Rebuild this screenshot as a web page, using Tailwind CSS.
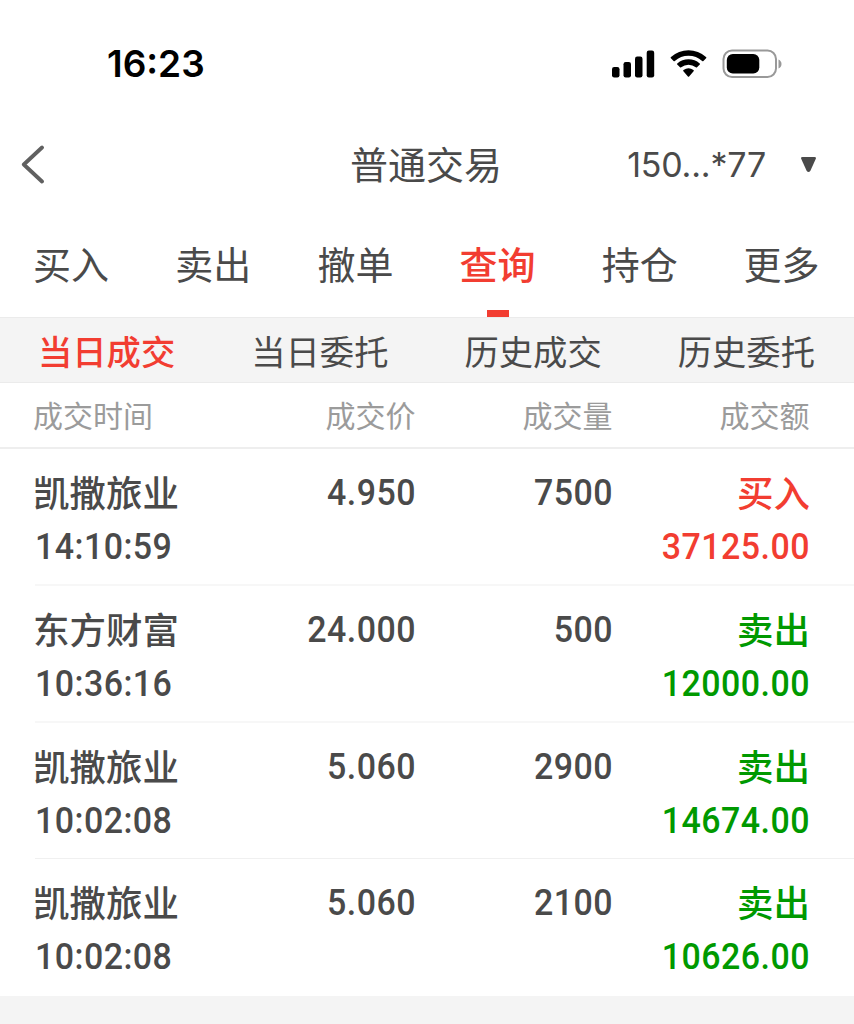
<!DOCTYPE html>
<html lang="zh-CN">
<head>
<meta charset="utf-8">
<title>普通交易</title>
<script src="https://cdn.jsdelivr.net/npm/@tailwindcss/browser@4"></script>
</head>
<body class="w-[854px] h-[1024px] overflow-hidden bg-[#f4f4f4] text-[#4a4a4a] font-['Noto_Sans_CJK_SC',sans-serif]">
<div class="bg-white h-[996px] flex flex-col">
  <div class="h-[128px] shrink-0 flex items-center justify-between pl-[107px] pr-[72px] text-black">
    <span class="font-['Inter',sans-serif] font-semibold text-[37px] leading-[40px]">16:23</span>
    <div class="flex items-center">
      <svg class="w-[43px] h-[28px]" viewBox="0 0 43 28"><rect x="0" y="17" width="7.5" height="10.5" rx="2.2"/><rect x="11.5" y="12" width="7.5" height="15.5" rx="2.2"/><rect x="23" y="6.5" width="7.5" height="21" rx="2.2"/><rect x="34.7" y="0.5" width="7.5" height="27" rx="2.2"/></svg>
      <svg class="ml-[15px] w-[38px] h-[28px]" viewBox="0 0 38 28"><path d="M0.9 8.2Q0.3 7.500 1 6.900A26 26 0 0 1 36 6.900Q36.700 7.500 36.100 8.200L33.400 11Q32.800 11.500 32.200 11A20.500 20.500 0 0 0 4.800 11Q4.200 11.500 3.600 11Z"/><path d="M7.200 14.600Q6.600 14 7.300 13.400A17 17 0 0 1 29.700 13.400Q30.400 14 29.800 14.600L27 17.300Q26.400 17.800 25.800 17.300A11.500 11.500 0 0 0 11.200 17.300Q10.600 17.800 10 17.300Z"/><path d="M13.400 21.200Q12.800 20.600 13.500 20A8.500 8.500 0 0 1 23.500 20Q24.200 20.600 23.600 21.200L19.100 26.500Q18.500 27.100 17.900 26.500Z"/></svg>
      <svg class="ml-[14px] w-[60px] h-[30px]" viewBox="0 0 60 30"><rect x="1.5" y="1.500" width="52.500" height="26.500" rx="8.500" fill="none" stroke="#999" stroke-width="2"/><rect x="4.800" y="5" width="32.500" height="19.500" rx="6"/><path d="M56.500 10.500Q59.500 12 59.500 15T56.500 19.500Z" fill="#999"/></svg>
    </div>
  </div>
  <div class="h-[73px] shrink-0 grid grid-cols-3 items-center">
    <svg class="ml-[20px] -mt-px w-[28px] h-[40px]" viewBox="0 0 28 40" fill="none" stroke="#606060" stroke-width="3.800" stroke-linecap="round" stroke-linejoin="round"><path d="M22 3.500L3.800 20.500L22 37.500"/></svg>
    <h1 class="-mt-[3px] pr-[2px] text-[38px] leading-[56px] whitespace-nowrap text-center">普通交易</h1>
    <div class="flex items-center justify-end pr-[37px]">
      <span class="pt-px font-['Inter',sans-serif] [font-feature-settings:'calt'_0] text-[34px] leading-[40px] tracking-[-0.2px]">150...*77</span>
      <svg class="ml-[34px] w-[17px] h-[17px]" viewBox="0 0 17 17"><path d="M2.500 1H14.500Q16.600 1 15.700 3L10.500 14.500Q8.500 17.500 6.500 14.500L1.300 3Q0.400 1 2.500 1Z" fill="#4a4a4a"/></svg>
    </div>
  </div>
  <nav class="h-[116px] shrink-0 grid grid-cols-6 pr-px text-[38px] leading-[56px] text-center">
    <span class="pt-[34px]">买入</span>
    <span class="pt-[34px]">卖出</span>
    <span class="pt-[34px]">撤单</span>
    <span class="pt-[34px] flex flex-col items-center justify-between text-[#f23d31] font-medium">查询<i class="block w-[22px] h-[7px] bg-[#f23d31]"></i></span>
    <span class="pt-[34px]">持仓</span>
    <span class="pt-[34px] -ml-px">更多</span>
  </nav>
  <nav class="h-[66px] shrink-0 grid grid-cols-4 items-center pr-px pb-px bg-[#f4f4f4] text-[34.300px] leading-[50px] text-center border-y border-[#ebebeb]">
    <span class="text-[#f23d31] font-medium">当日成交</span>
    <span>当日委托</span>
    <span>历史成交</span>
    <span>历史委托</span>
  </nav>
  <div class="h-[66px] shrink-0 grid grid-cols-[1fr_1fr_197px_197px] items-center pl-[33px] pr-[44.5px] pb-[2px] text-[30px] leading-[44px] text-right text-[#9b9b9b] border-b-2 border-[#eeeeee]">
    <span class="text-left">成交时间</span><span>成交价</span><span>成交量</span><span>成交额</span>
  </div>
  <div class="ml-[35px] h-[137px] shrink-0 grid grid-cols-[190px_1fr_197px_197px] grid-rows-[54px_54px] pt-[16px] pr-[44px] text-right text-[36.500px] leading-[54px] font-medium border-b-2 border-[#f7f7f7]">
    <span class="text-left -ml-[2px]">凯撒旅业</span><span class="pt-px font-[Roboto] font-[460] tracking-[0.500px] origin-right scale-x-[0.93]">4.950</span><span class="pt-px font-[Roboto] font-[460] tracking-[0.500px] origin-right scale-x-[0.93]">7500</span><span class="text-[#f23d31]">买入</span>
    <span class="pt-px text-left font-[Roboto] font-[460] tracking-[0.500px] origin-left scale-x-[0.93]">14:10:59</span><span class="pt-px col-span-3 text-[#f23d31] font-[Roboto] font-[460] tracking-[0.500px] origin-right scale-x-[0.93]">37125.00</span>
  </div>
  <div class="ml-[35px] h-[137px] shrink-0 grid grid-cols-[190px_1fr_197px_197px] grid-rows-[54px_54px] pt-[16px] pr-[44px] text-right text-[36.500px] leading-[54px] font-medium border-b-2 border-[#f7f7f7]">
    <span class="text-left -ml-[2px]">东方财富</span><span class="pt-px font-[Roboto] font-[460] tracking-[0.500px] origin-right scale-x-[0.93]">24.000</span><span class="pt-px font-[Roboto] font-[460] tracking-[0.500px] origin-right scale-x-[0.93]">500</span><span class="text-[#009900]">卖出</span>
    <span class="pt-px text-left font-[Roboto] font-[460] tracking-[0.500px] origin-left scale-x-[0.93]">10:36:16</span><span class="pt-px col-span-3 text-[#009900] font-[Roboto] font-[460] tracking-[0.500px] origin-right scale-x-[0.93]">12000.00</span>
  </div>
  <div class="ml-[35px] h-[136px] shrink-0 grid grid-cols-[190px_1fr_197px_197px] grid-rows-[54px_54px] pt-[16px] pr-[44px] text-right text-[36.500px] leading-[54px] font-medium border-b border-[#f0f0f0]">
    <span class="text-left -ml-[2px]">凯撒旅业</span><span class="pt-px font-[Roboto] font-[460] tracking-[0.500px] origin-right scale-x-[0.93]">5.060</span><span class="pt-px font-[Roboto] font-[460] tracking-[0.500px] origin-right scale-x-[0.93]">2900</span><span class="text-[#009900]">卖出</span>
    <span class="pt-px text-left font-[Roboto] font-[460] tracking-[0.500px] origin-left scale-x-[0.93]">10:02:08</span><span class="pt-px col-span-3 text-[#009900] font-[Roboto] font-[460] tracking-[0.500px] origin-right scale-x-[0.93]">14674.00</span>
  </div>
  <div class="ml-[35px] h-[137px] shrink-0 grid grid-cols-[190px_1fr_197px_197px] grid-rows-[54px_54px] pt-[16px] pr-[44px] text-right text-[36.500px] leading-[54px] font-medium">
    <span class="text-left -ml-[2px]">凯撒旅业</span><span class="pt-px font-[Roboto] font-[460] tracking-[0.500px] origin-right scale-x-[0.93]">5.060</span><span class="pt-px font-[Roboto] font-[460] tracking-[0.500px] origin-right scale-x-[0.93]">2100</span><span class="text-[#009900]">卖出</span>
    <span class="pt-px text-left font-[Roboto] font-[460] tracking-[0.500px] origin-left scale-x-[0.93]">10:02:08</span><span class="pt-px col-span-3 text-[#009900] font-[Roboto] font-[460] tracking-[0.500px] origin-right scale-x-[0.93]">10626.00</span>
  </div>
</div>
</body>
</html>
